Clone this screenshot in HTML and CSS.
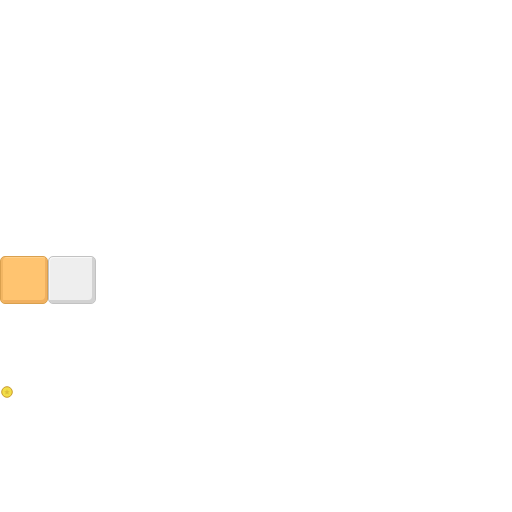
FILE: index.html
```html
<!DOCTYPE html>
<html>
<head>
<meta charset="utf-8">
<link rel="stylesheet" href="styles.css">
</head>
<body>
<div class="stage">
  <div class="tiles">
    <div class="tile tile-orange"></div>
    <div class="tile tile-grey"></div>
  </div>
  <div class="coin">
    <svg width="12" height="12" viewBox="0 0 12 12">
      <circle cx="6" cy="6" r="5.3" fill="#F2DE48" stroke="#C99A2E" stroke-width="1"/>
      <path d="M6 3.2 L6.8 5.2 L8.8 5.3 L7.2 6.6 L7.8 8.6 L6 7.5 L4.2 8.6 L4.8 6.6 L3.2 5.3 L5.2 5.2 Z" fill="#DDBE3A"/>
    </svg>
  </div>
</div>
</body>
</html>
```
FILE: styles.css
```css
html, body {
  margin: 0;
  padding: 0;
  background: #ffffff;
  font-family: "Liberation Sans", sans-serif;
}
.stage {
  width: 512px;
  height: 512px;
  padding-top: 256px;
  box-sizing: border-box;
}
.tiles {
  display: flex;
  gap: 0;
}
.tile {
  width: 48px;
  height: 48px;
  box-sizing: border-box;
  border-radius: 5px;
  border: 1px solid;
}
.tile-orange {
  background: #FFC470;
  border-color: #D9A04E;
  box-shadow: inset 2px 0 0 #F2B663, inset -2px -3px 0 #F0B060, inset 0 1px 0 #FFD08A;
}
.tile-grey {
  background: #EEEEEE;
  border-color: #C2C2C2;
  box-shadow: inset -3px -3px 0 #D2D2D2, inset 1px 1px 0 #F8F8F8;
}
.coin {
  margin-top: 82px;
  margin-left: 1px;
  width: 12px;
  height: 12px;
  line-height: 0;
}
```
